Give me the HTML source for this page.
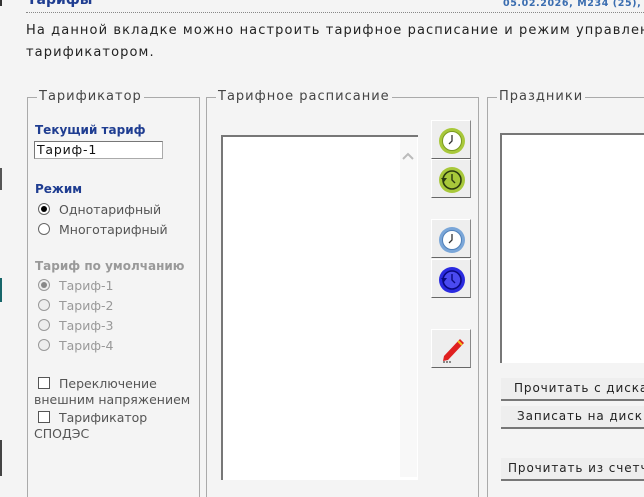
<!DOCTYPE html>
<html><head><meta charset="utf-8"><style>
*{margin:0;padding:0;box-sizing:border-box}
body{width:644px;height:476px;overflow:hidden;background:#f4f4f4;position:relative;font-family:"DejaVu Sans","Liberation Sans",sans-serif;color:#444}
.a{position:absolute;white-space:nowrap}
.fs{position:absolute;border:1px solid #aaa;border-bottom:none;height:400px}
.lg{position:absolute;top:-9px;background:#f4f4f4;padding:0 2px;font-size:13px;letter-spacing:1px;color:#444}
.lb{font-size:12px;font-weight:bold;color:#1f3d91}
.t{font-size:12.5px;color:#555}
.g{color:#999}
.rd{position:absolute;width:12px;height:12px;border:1px solid #666;border-radius:50%;background:#fff}
.rd.on::after{content:"";position:absolute;left:2px;top:2px;width:6px;height:6px;border-radius:50%;background:#000}
.rd.dis{border-color:#999;background:#eee}
.rd.dis.on::after{background:#888}
.cb{position:absolute;width:12px;height:12px;border:1px solid #555;background:#fff}
.btn{position:absolute;left:431px;width:40px;height:39px;background:#eee;border:1px solid #fff;border-right-color:#888;border-bottom-color:#666}
.btn svg{position:absolute;left:6px;top:6px}
.wb{position:absolute;left:501px;width:150px;height:23px;background:#eee;border-bottom:2px solid #777;border-right:1px solid #888;font-size:12px;letter-spacing:0.9px;color:#222;padding:3px 0 0 13px;white-space:nowrap;overflow:hidden}
</style></head><body>
<div class="a" style="left:0;top:0;width:2px;height:6px;background:#333"></div>
<div class="a" style="left:0;top:168px;width:2px;height:22px;background:#555"></div>
<div class="a" style="left:0;top:278px;width:2px;height:24px;background:#17666a"></div>
<div class="a" style="left:0;top:440px;width:2px;height:36px;background:#444"></div>
<div class="a" style="left:27px;top:-8px;font-size:14px;font-weight:bold;color:#1f3d91">Тарифы</div>
<div class="a" style="left:503px;top:-2px;font-size:9.5px;font-weight:bold;color:#3a6db0;letter-spacing:.6px">05.02.2026, M234 (25), 5</div>
<div class="a" style="left:26px;top:12px;width:620px;border-top:1px dotted #888"></div>
<div class="a" style="left:26px;top:23px;font-size:13px;letter-spacing:1.1px;color:#222">На данной вкладке можно настроить тарифное расписание и режим управлен</div>
<div class="a" style="left:26px;top:45px;font-size:13px;letter-spacing:1.1px;color:#222">тарификатором.</div>

<div class="fs" style="left:27px;top:97px;width:173px"><div class="lg" style="left:9px">Тарификатор</div></div>
<div class="fs" style="left:206px;top:97px;width:273px"><div class="lg" style="left:9px">Тарифное расписание</div></div>
<div class="fs" style="left:487px;top:97px;width:170px"><div class="lg" style="left:9px">Праздники</div></div>

<div class="a lb" style="left:35px;top:123px">Текущий тариф</div>
<div class="a" style="left:34px;top:141px;width:129px;height:18px;background:#fff;border:1px solid #aaa;border-top-color:#777;border-left-color:#777;font-size:12.5px;color:#111;padding:0 2px;letter-spacing:.8px">Тариф-1</div>
<div class="a lb" style="left:35px;top:182px">Режим</div>
<div class="rd on" style="left:38px;top:203px"></div><div class="a t" style="left:59px;top:202px">Однотарифный</div>
<div class="rd" style="left:38px;top:223px"></div><div class="a t" style="left:59px;top:222px">Многотарифный</div>
<div class="a lb" style="left:35px;top:259px;color:#999">Тариф по умолчанию</div>
<div class="rd dis on" style="left:38px;top:279px"></div><div class="a t g" style="left:59px;top:278px">Тариф-1</div>
<div class="rd dis" style="left:38px;top:299px"></div><div class="a t g" style="left:59px;top:298px">Тариф-2</div>
<div class="rd dis" style="left:38px;top:319px"></div><div class="a t g" style="left:59px;top:318px">Тариф-3</div>
<div class="rd dis" style="left:38px;top:339px"></div><div class="a t g" style="left:59px;top:338px">Тариф-4</div>
<div class="cb" style="left:38px;top:377px"></div><div class="a t" style="left:59px;top:376px">Переключение</div>
<div class="a t" style="left:34px;top:392px">внешним напряжением</div>
<div class="cb" style="left:38px;top:411px"></div><div class="a t" style="left:59px;top:410px">Тарификатор</div>
<div class="a t" style="left:34px;top:426px">СПОДЭС</div>

<div class="a" style="left:221px;top:135px;width:197px;height:345px;background:#fff;border-top:2px solid #777;border-left:2px solid #777"></div>
<div class="a" style="left:400px;top:137px;width:17px;height:340px;background:#f8f8f8"></div>
<svg class="a" style="left:401px;top:152px" width="14" height="10"><path d="M2 7 L7 2 L12 7" stroke="#bbb" stroke-width="2" fill="none"/></svg>

<div class="btn" style="top:120px"><svg width="28" height="28"><circle cx="14" cy="14" r="13" fill="#a8c83a"/><circle cx="14" cy="14" r="9.5" fill="#fff" stroke="#7a9a20"/><path d="M14 8v6l-3 3" stroke="#333" stroke-width="1.3" fill="none"/></svg></div>
<div class="btn" style="top:159px"><svg width="28" height="28"><circle cx="14" cy="14" r="13" fill="#a8c83a"/><circle cx="14" cy="14" r="9" fill="#a8c83a" stroke="#2b3a10" stroke-width="1.6"/><path d="M14 8v6l3 3" stroke="#2b3a10" stroke-width="1.4" fill="none"/><path d="M3 12l3 4 3-4z" fill="#2b3a10"/></svg></div>
<div class="btn" style="top:219px"><svg width="28" height="28"><circle cx="14" cy="14" r="13" fill="#7aa6d8"/><circle cx="14" cy="14" r="9.5" fill="#fff" stroke="#5080b8"/><path d="M14 8v6l-3 3" stroke="#333" stroke-width="1.3" fill="none"/></svg></div>
<div class="btn" style="top:259px"><svg width="28" height="28"><circle cx="14" cy="14" r="13" fill="#2a2ae0"/><circle cx="14" cy="14" r="9" fill="#4a4af0" stroke="#0a0a80" stroke-width="1.6"/><path d="M14 8v6l3 3" stroke="#0a0a80" stroke-width="1.4" fill="none"/><path d="M3 12l3 4 3-4z" fill="#0a0a80"/></svg></div>
<div class="btn" style="top:329px"><svg width="28" height="28"><path d="M22 3 L26 7 L10 24 L5 25 L6 20 Z" fill="#e02020"/><path d="M20 5 L24 9" stroke="#f0c020" stroke-width="2"/><path d="M5 26h8" stroke="#222" stroke-dasharray="2 1"/></svg></div>

<div class="a" style="left:500px;top:133px;width:150px;height:230px;background:#fff;border-top:2px solid #777;border-left:2px solid #777"></div>
<div class="wb" style="top:378px">Прочитать с диска</div>
<div class="wb" style="top:406px;padding-left:16px">Записать на диск</div>
<div class="wb" style="top:458px;padding-left:7px">Прочитать из счетчика</div>
</body></html>
